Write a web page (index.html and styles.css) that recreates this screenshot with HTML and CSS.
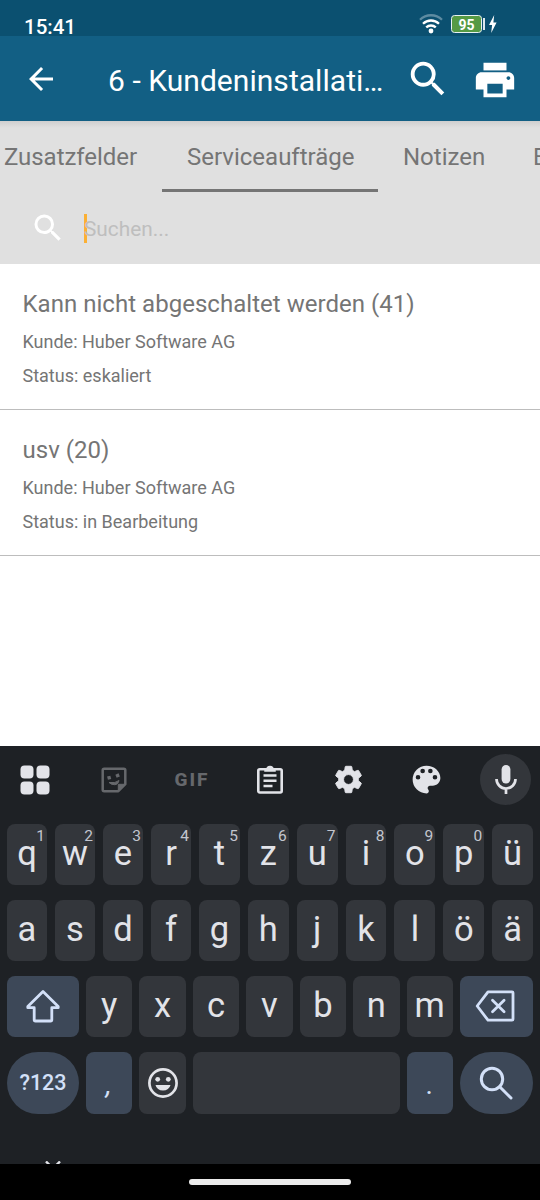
FILE: index.html
```html
<!DOCTYPE html>
<html lang="de">
<head>
<meta charset="utf-8">
<title>Kundeninstallation</title>
<link rel="stylesheet" href="styles.css">
</head>
<body>
<div class="screen">
  <header>
    <div class="status">
      <span class="clock">15:41</span>
      <svg class="wifi" width="24" height="20" viewBox="0 0 24 20" fill="none" stroke="#fff" stroke-width="2.3"><path d="M1 5.8a15.6 15.6 0 0 1 22 0" stroke="#5d8ba1"/><path d="M4 9.8a11.4 11.4 0 0 1 16 0"/><path d="M7.2 13.4a7 7 0 0 1 9.6 0"/><circle cx="12" cy="17" r="2.4" fill="#fff" stroke="none"/></svg>
      <span class="battery">95</span>
      <span class="battery-tip"></span>
      <svg class="bolt" width="8" height="18" viewBox="0 0 8 18"><path d="M5.2 0 0 10h3.1L2.2 18 7.6 7.6H4.4z" fill="#fff"/></svg>
    </div>
    <div class="appbar">
      <svg class="back" width="36" height="36" viewBox="0 0 24 24" fill="#fff"><path d="M20 11H7.83l5.59-5.59L12 4l-8 8 8 8 1.41-1.41L7.83 13H20z"/></svg>
      <h1>6 - Kundeninstallati…</h1>
      <svg class="find" width="46" height="46" viewBox="0 0 24 24" fill="#fff"><path d="M15.5 14h-.79l-.28-.27A6.47 6.47 0 0 0 16 9.5 6.5 6.5 0 1 0 9.5 16c1.61 0 3.09-.59 4.23-1.57l.27.28v.79l5 4.99L20.49 19zm-6 0C7.01 14 5 11.99 5 9.5S7.01 5 9.5 5 14 7.01 14 9.5 11.99 14 9.5 14z"/></svg>
      <svg class="print" width="46" height="46" viewBox="0 0 24 24" fill="#fff"><path d="M19 8H5c-1.66 0-3 1.34-3 3v6h4v4h12v-4h4v-6c0-1.66-1.34-3-3-3zm-3 11H8v-5h8zm3-7c-.55 0-1-.45-1-1s.45-1 1-1 1 .45 1 1-.45 1-1 1z"/><path d="M18 3H6v4h12z"/></svg>
    </div>
  </header>

  <section class="filter">
    <nav class="tabs">
      <span class="tab first">Zusatzfelder</span>
      <span class="tab active">Serviceaufträge</span>
      <span class="tab">Notizen</span>
      <span class="tab">E</span>
    </nav>
    <div class="search">
      <svg width="36" height="36" viewBox="0 0 24 24" fill="#fff"><path d="M15.5 14h-.79l-.28-.27A6.47 6.47 0 0 0 16 9.5 6.5 6.5 0 1 0 9.5 16c1.61 0 3.09-.59 4.23-1.57l.27.28v.79l5 4.99L20.49 19zm-6 0C7.01 14 5 11.99 5 9.5S7.01 5 9.5 5 14 7.01 14 9.5 11.99 14 9.5 14z"/></svg>
      <span class="placeholder">Suchen...</span>
    </div>
  </section>

  <main>
    <article class="item">
      <h2>Kann nicht abgeschaltet werden (41)</h2>
      <p>Kunde: Huber Software AG</p>
      <p>Status: eskaliert</p>
    </article>
    <article class="item">
      <h2>usv (20)</h2>
      <p>Kunde: Huber Software AG</p>
      <p>Status: in Bearbeitung</p>
    </article>
  </main>

  <section class="keyboard">
    <div class="tools">
      <span class="tool start"><svg width="30" height="30" viewBox="0 0 30 30" fill="#e2e3e8"><rect x=".5" y=".5" width="13" height="13" rx="4"/><rect x="16.5" y=".5" width="13" height="13" rx="4"/><rect x=".5" y="16.5" width="13" height="13" rx="4"/><rect x="16.5" y="16.5" width="13" height="13" rx="4"/></svg></span>
      <span class="tool"><svg width="26" height="26" viewBox="0 0 26 26" fill="none" stroke="#66686c" stroke-width="2.5"><path d="M3.2 1.7h19.6q1.500 0 1.500 1.500v14l-7 7H3.200q-1.500 0-1.500-1.500V3.200q0-1.500 1.500-1.500z" stroke-linejoin="round"/><path d="M17.300 24.300v-7h7z" fill="#66686c" stroke-width="1"/><path d="M6.500 11.200l3.300-.9M15 9.200l3.200-1.300" stroke-width="3.400"/><path d="M8 15.500q6.500 1 10-2-.8 4.200-4.500 4.200-3.500 0-5.500-2.200z" fill="#66686c" stroke-width="1"/></svg></span>
      <span class="tool gif">GIF</span>
      <span class="tool"><svg width="28" height="30" viewBox="0 0 28 30" fill="none" stroke="#e2e3e8" stroke-width="2.600"><rect x="2.300" y="4.300" width="23.400" height="23.200" rx="1.500"/><path d="M7.500 10.500h13M7.500 15.700h13M7.500 21h9"/><path d="M9 4.500h2a3 3 0 0 1 6 0h2V6H9z" fill="#e2e3e8" stroke-width="1.500"/></svg></span>
      <span class="tool"><svg width="33" height="33" viewBox="0 0 24 24" fill="#e2e3e8" stroke="#e2e3e8" stroke-width=".7" stroke-linejoin="round"><path d="M19.140 12.940c.04-.3.060-.61.060-.94 0-.32-.02-.64-.07-.94l2.030-1.580c.18-.14.230-.41.120-.61l-1.920-3.320c-.12-.22-.37-.29-.59-.22l-2.390.96c-.5-.38-1.030-.7-1.620-.94l-.36-2.540c-.04-.24-.24-.41-.48-.41h-3.840c-.24 0-.43.170-.47.410l-.36 2.540c-.59.240-1.130.570-1.620.94l-2.390-.96c-.22-.08-.47 0-.59.220L2.740 8.870c-.12.210-.08.470.120.610l2.030 1.580c-.05.300-.09.630-.09.940s.02.640.070.94l-2.030 1.580c-.18.140-.23.410-.12.610l1.920 3.320c.12.220.370.290.590.220l2.390-.96c.5.380 1.030.700 1.620.94l.36 2.540c.05.240.240.410.480.410h3.840c.24 0 .44-.17.470-.41l.36-2.540c.59-.24 1.130-.56 1.620-.94l2.390.96c.22.080.470 0 .590-.22l1.920-3.320c.12-.22.070-.47-.12-.61zM12 15.600A3.600 3.600 0 1 1 12 8.400a3.600 3.600 0 0 1 0 7.200z"/></svg></span>
      <span class="tool"><svg width="37" height="37" viewBox="0 0 24 24" fill="#e2e3e8"><path d="M12 3a9 9 0 0 0 0 18c.83 0 1.500-.67 1.500-1.500 0-.39-.15-.74-.39-1.010-.23-.26-.38-.61-.38-.99 0-.83.670-1.500 1.500-1.500H16c2.760 0 5-2.240 5-5 0-4.420-4.030-8-9-8zm-5.500 9a1.500 1.500 0 1 1 0-3 1.500 1.500 0 0 1 0 3zm3-4a1.500 1.500 0 1 1 0-3 1.500 1.500 0 0 1 0 3zm5 0a1.500 1.500 0 1 1 0-3 1.500 1.500 0 0 1 0 3zm3 4a1.500 1.500 0 1 1 0-3 1.500 1.500 0 0 1 0 3z"/></svg></span>
      <span class="tool end"><span class="mic"><svg width="22" height="30" viewBox="0 0 22 30"><rect x="6.600" y="0" width="8.800" height="18.500" rx="4.400" fill="#e2e3e8"/><path d="M1.500 14a9.500 9.500 0 0 0 19 0M11 23.500v5.500" fill="none" stroke="#e2e3e8" stroke-width="2.700"/></svg></span></span>
    </div>
    <div class="row letters">
      <span class="key">q<sup>1</sup></span><span class="key">w<sup>2</sup></span><span class="key">e<sup>3</sup></span><span class="key">r<sup>4</sup></span><span class="key">t<sup>5</sup></span><span class="key">z<sup>6</sup></span><span class="key">u<sup>7</sup></span><span class="key">i<sup>8</sup></span><span class="key">o<sup>9</sup></span><span class="key">p<sup>0</sup></span><span class="key">ü</span>
    </div>
    <div class="row letters">
      <span class="key">a</span><span class="key">s</span><span class="key">d</span><span class="key">f</span><span class="key">g</span><span class="key">h</span><span class="key">j</span><span class="key">k</span><span class="key">l</span><span class="key">ö</span><span class="key">ä</span>
    </div>
    <div class="row wide">
      <span class="key fn"><svg width="36" height="34" viewBox="0 0 36 34" fill="none" stroke="#d3e0f8" stroke-width="2.800" stroke-linejoin="round"><path d="M18 2.500 2.800 17.500v1.200h6.400v12q0 1.300 1.300 1.300h15q1.300 0 1.300-1.300v-12h6.400v-1.200z"/></svg></span><span class="key">y</span><span class="key">x</span><span class="key">c</span><span class="key">v</span><span class="key">b</span><span class="key">n</span><span class="key">m</span><span class="key fn right"><svg width="40" height="34" viewBox="0 0 40 34" fill="none" stroke="#d3e0f8" stroke-width="2.800" stroke-linejoin="round"><path d="M13 2.800h24q1 0 1 1v26.400q0 1-1 1H13L2.200 17z"/><path d="m17.500 11.200 11.600 11.600m0-11.600L17.500 22.800" stroke-linecap="round"/></svg></span>
    </div>
    <div class="row wide last">
      <span class="key fn pill">?123</span><span class="key soft comma">,</span><span class="key emoji"><svg width="30" height="30" viewBox="0 0 30 30" fill="#e2e3e8"><circle cx="15" cy="15" r="13.600" fill="none" stroke="#e2e3e8" stroke-width="2.700"/><circle cx="9.700" cy="11.300" r="2.400"/><circle cx="20.300" cy="11.300" r="2.400"/><path d="M7.500 17h15a7.600 6.500 0 0 1-15 0z"/></svg></span><span class="key space"></span><span class="key soft dot">.</span><span class="key fn pill right"><svg width="34" height="34" viewBox="0 0 34 34" fill="none" stroke="#d3e0f8" stroke-width="3"><circle cx="13" cy="13" r="10.700"/><path d="m20.700 20.700 11.300 11.300" stroke-linecap="round"/></svg></span>
    </div>
    <svg class="collapse" width="16" height="3" viewBox="0 0 16 3" fill="none" stroke="#e2e3e8" stroke-width="2.400"><path d="M1 .5l7 7 7-7"/></svg>
  </section>
  <footer><span class="home"></span></footer>
</div>
</body>
</html>
```
FILE: styles.css
```css
* { box-sizing: border-box; margin: 0; padding: 0; }
body { font-family: Roboto, "Liberation Sans", sans-serif; background: #fff; }
svg { display: block; flex: none; }
.screen { width: 540px; height: 1200px; overflow: hidden; display: flex; flex-direction: column; }

.status { height: 36px; background: #0b5070; color: #fff; display: flex; align-items: flex-start; padding: 14px 0 0 24px; }
.clock { font-size: 20.5px; font-weight: 500; line-height: 19px; margin-top: 4px; width: 395px; }
.battery { width: 31px; height: 18px; margin: 1px 0 0 8px; border: 1.5px solid #e8f1f4; border-radius: 3.5px; background: #559a44; font-size: 14px; font-weight: 700; line-height: 18px; text-align: center; }
.battery-tip { width: 2px; height: 12px; margin: 4px 0 0 1px; background: #dde8ed; }
.bolt { margin: 1px 0 0 4px; }

.appbar { height: 85px; background: #125f84; display: flex; align-items: center; }
.back { margin-left: 23px; }
h1 { width: 297px; margin: 4px 0 0 49px; color: #fff; font-size: 30px; line-height: 36px; font-weight: 400; letter-spacing: .04px; white-space: nowrap; }
.print { margin: 2px 0 0 21px; }

.filter { height: 143px; background: linear-gradient(#cfcfcf, #e0e0e0 7px); }
.tabs { height: 71px; display: flex; overflow: hidden; color: #757575; font-size: 24px; line-height: 72px; white-space: nowrap; }
.tab { padding: 0 25px; flex: none; }
.tab.first { padding-left: 4px; width: 162px; letter-spacing: -.05px; }
.tab.active { width: 216px; box-shadow: inset 0 -3px #757575; }
.tab:nth-child(3) { width: 130px; }
.search { height: 72px; display: flex; align-items: center; padding-left: 30px; }
.placeholder { margin-left: 18px; height: 29px; line-height: 30px; font-size: 20.8px; color: #bebebe; box-shadow: inset 3px 0 #fbb034; }

main { flex: 1; background: #fff; }
.item { height: 146px; padding: 24px 22.5px 0; border-bottom: 1.5px solid #bdbdbd; color: #757575; }
h2 { font-size: 24px; line-height: 32px; font-weight: 400; letter-spacing: .03px; white-space: nowrap; }
p { font-size: 18px; line-height: 34px; white-space: nowrap; }
.item h2 + p { margin-top: 4.5px; }

.keyboard { height: 418px; background: #1e2125; position: relative; }
.tools { height: 78px; padding-top: 8px; display: grid; grid-template-columns: 75px repeat(5, 78px) 75px; align-items: start; }
.tool { height: 51px; display: flex; align-items: center; justify-content: center; }
.tool.start { padding-right: 6px; }
.tool.end { padding-left: 6px; }
.gif { color: #66686c; font-size: 19px; font-weight: 800; letter-spacing: 2px; }
.mic { width: 51px; height: 51px; border-radius: 50%; background: #33363b; display: flex; align-items: center; justify-content: center; }
.row { height: 61px; margin-bottom: 15px; padding: 0 7px; display: flex; gap: 8px; }
.row.wide { gap: 7px; }
.row.last { height: 62px; margin-bottom: 0; }
.key { flex: 1 1 0; min-width: 0; position: relative; display: flex; align-items: center; justify-content: center; padding-bottom: 3px; border-radius: 8px; background: #33363b; color: #e2e3e8; font-size: 34.5px; line-height: 44px; }
.letters .key:nth-child(-n+4) { flex: 0 0 40px; }
.key:has(svg) { padding-bottom: 0; }
sup { position: absolute; right: 2px; top: 3px; font-size: 15.5px; line-height: 18px; color: #c3c6cf; }
.key.fn { flex: 0 0 72px; background: #3d4858; color: #d3e0f8; padding-bottom: 1px; }
.key.fn.right { flex-basis: 73px; padding-right: 2px; }
.key.pill { border-radius: 32px; font-size: 21.5px; font-weight: 500; }
.key.soft, .key.emoji { flex: 0 0 46.4px; }
.key.soft { background: #3d4858; color: #d3e0f8; font-size: 28px; padding: 4px 1px 0 0; }
.key.comma { font-style: italic; }
.collapse { position: absolute; left: 45px; bottom: 0; }
footer { height: 36px; background: #000; display: flex; justify-content: center; padding-top: 15px; }
.home { width: 162px; height: 6px; border-radius: 3px; background: #ebebeb; }
```
